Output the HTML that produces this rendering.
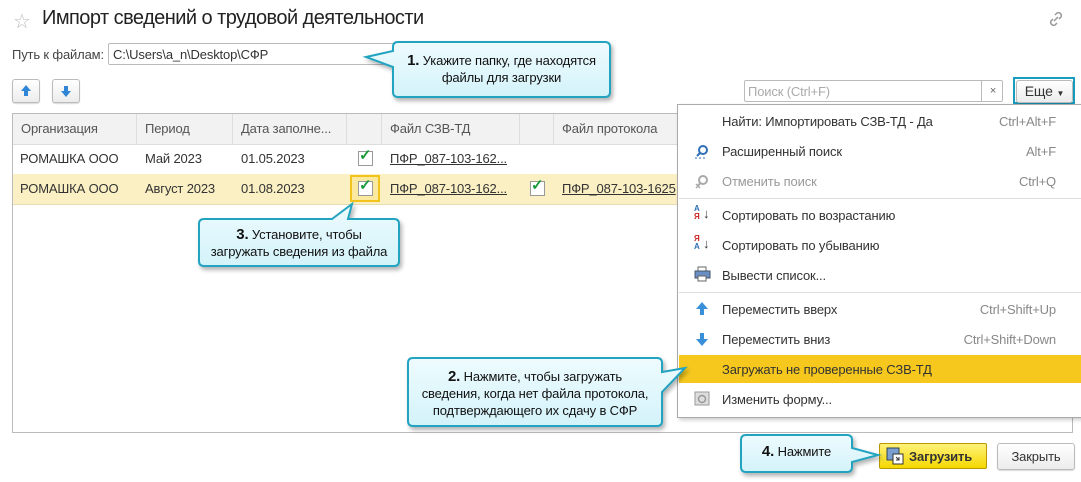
<!DOCTYPE html>
<html><head><meta charset="utf-8"><style>
body{margin:0;width:1081px;height:482px;background:#fff;font-family:"Liberation Sans",sans-serif;font-size:13px;color:#333;position:relative;overflow:hidden;letter-spacing:-0.15px}
.a{position:absolute}
.btn{position:absolute;border:1px solid #bbb;border-radius:3px;background:linear-gradient(#fff,#ececec);box-shadow:0 1px 1px rgba(0,0,0,.15)}
.th{position:absolute;top:114px;height:30px;line-height:30px;color:#555;border-right:1px solid #ddd;box-sizing:border-box;padding-left:8px}
.td{position:absolute;height:30px;line-height:30px;padding-left:8px;box-sizing:border-box}
.u{text-decoration:underline;color:#333}
.cb{position:absolute;width:13px;height:13px;border:1px solid #999;background:#fff}
.mi{position:absolute;left:722px;font-size:13px;color:#333}
.sc{position:absolute;right:25px;color:#888;font-size:13px}
.ct{position:absolute;text-align:center;font-size:13px;color:#111;line-height:17px}
</style></head><body>
<div class="a" style="left:13px;top:9px;font-size:20px;color:#bbb">☆</div>
<div class="a" style="left:42px;top:7px;font-size:20px;color:#222;letter-spacing:-0.55px">Импорт сведений о трудовой деятельности</div>
<svg class="a" style="left:1047px;top:10px" width="18" height="18" viewBox="0 0 18 18"><g fill="none" stroke="#999" stroke-width="1.5"><path d="M7 11l4-4"/><path d="M8 5l2-2a3 3 0 0 1 4 4l-2 2"/><path d="M10 13l-2 2a3 3 0 0 1-4-4l2-2"/></g></svg>
<div class="a" style="left:12px;top:47px;color:#444">Путь к файлам:</div>
<div class="a" style="left:108px;top:43px;width:330px;height:22px;border:1px solid #bbb;border-radius:2px;box-sizing:border-box;padding:3px 4px">C:\Users\a_n\Desktop\СФР</div>
<div class="btn" style="left:12px;top:79px;width:26px;height:22px"><svg width="26" height="22"><path d="M13 5l-5 6h3v5h4v-5h3z" fill="#2f86d6"/></svg></div>
<div class="btn" style="left:52px;top:79px;width:26px;height:22px"><svg width="26" height="22"><path d="M13 17l-5-6h3V6h4v5h3z" fill="#2f86d6"/></svg></div>
<div class="a" style="left:744px;top:80px;width:259px;height:22px;border:1px solid #bbb;border-radius:2px;box-sizing:border-box;padding:3px 3px;color:#aaa">Поиск (Ctrl+F)</div>
<div class="a" style="left:981px;top:80px;width:22px;height:22px;border-left:1px solid #bbb;text-align:center;line-height:22px;color:#666;font-size:11px">×</div>
<div class="a" style="left:1013px;top:77px;width:62px;height:27px;border:2px solid #1a9cbd;box-sizing:border-box"></div>
<div class="btn" style="left:1016px;top:80px;width:55px;height:21px;line-height:21px;text-align:center;font-size:14px;color:#333">Еще <span style="font-size:8px">▼</span></div>
<div class="a" style="left:12px;top:113px;width:1061px;height:320px;border:1px solid #bbb;box-sizing:border-box"></div>
<div class="a" style="left:13px;top:114px;width:1059px;height:30px;background:#f2f2f2;border-bottom:1px solid #ddd"></div>
<div class="th" style="left:13px;width:124px">Организация</div>
<div class="th" style="left:137px;width:96px">Период</div>
<div class="th" style="left:233px;width:114px">Дата заполне...</div>
<div class="th" style="left:347px;width:35px"></div>
<div class="th" style="left:382px;width:138px">Файл СЗВ-ТД</div>
<div class="th" style="left:520px;width:34px"></div>
<div class="th" style="left:554px;width:130px">Файл протокола</div>
<div class="a" style="left:13px;top:144px;width:670px;height:30px;border-bottom:1px solid #eee"></div>
<div class="td" style="left:12px;top:144px">РОМАШКА ООО</div>
<div class="td" style="left:137px;top:144px">Май 2023</div>
<div class="td" style="left:233px;top:144px">01.05.2023</div>
<div class="cb" style="left:358px;top:151px"></div><div class="a" style="left:359px;top:146px;color:#1a9a3a;font-size:15px;font-weight:bold">✓</div>
<div class="td u" style="left:382px;top:144px">ПФР_087-103-162...</div>
<div class="a" style="left:13px;top:174px;width:670px;height:30px;background:#fbf0c4;border-bottom:1px solid #e5dcb0"></div>
<div class="td" style="left:12px;top:174px">РОМАШКА ООО</div>
<div class="td" style="left:137px;top:174px">Август 2023</div>
<div class="td" style="left:233px;top:174px">01.08.2023</div>
<div class="a" style="left:350px;top:175px;width:30px;height:27px;border:2px solid #f2c31a;box-sizing:border-box;background:#fbe9a0"></div>
<div class="cb" style="left:358px;top:181px"></div><div class="a" style="left:359px;top:176px;color:#1a9a3a;font-size:15px;font-weight:bold">✓</div>
<div class="td u" style="left:382px;top:174px">ПФР_087-103-162...</div>
<div class="cb" style="left:530px;top:181px"></div><div class="a" style="left:531px;top:176px;color:#1a9a3a;font-size:15px;font-weight:bold">✓</div>
<div class="td u" style="left:554px;top:174px">ПФР_087-103-1625</div>
<div class="a" style="left:677px;top:104px;width:410px;height:312px;background:#fff;border:1px solid #aaa;box-shadow:2px 2px 4px rgba(0,0,0,.2)"></div>
<div class="mi" style="top:114px">Найти: Импортировать СЗВ-ТД - Да</div><div class="sc" style="top:114px">Ctrl+Alt+F</div>
<svg class="a" style="left:694px;top:144px" width="16" height="16"><circle cx="9" cy="6" r="4" fill="none" stroke="#2f6fb5" stroke-width="2"/><path d="M6 9l-3 3" stroke="#2f6fb5" stroke-width="2"/><path d="M1 14h2M5 14h2M9 14h2" stroke="#2f6fb5"/></svg>
<div class="mi" style="top:144px">Расширенный поиск</div><div class="sc" style="top:144px">Alt+F</div>
<svg class="a" style="left:694px;top:174px" width="16" height="16"><circle cx="9" cy="6" r="4" fill="none" stroke="#aaa" stroke-width="2"/><path d="M6 9l-3 3M2 10l4 4M6 10l-4 4" stroke="#aaa" stroke-width="1.5"/></svg>
<div class="mi" style="top:174px;color:#999">Отменить поиск</div><div class="sc" style="top:174px">Ctrl+Q</div>
<div class="a" style="left:679px;top:198px;width:402px;height:1px;background:#ddd"></div>
<div class="a" style="left:694px;top:205px;font-size:8px;line-height:8px;color:#2f6fb5;font-weight:bold">А<br><span style="color:#c22">Я</span></div><div class="a" style="left:703px;top:206px;font-size:13px">↓</div>
<div class="mi" style="top:208px">Сортировать по возрастанию</div>
<div class="a" style="left:694px;top:235px;font-size:8px;line-height:8px;color:#c22;font-weight:bold">Я<br><span style="color:#2f6fb5">А</span></div><div class="a" style="left:703px;top:236px;font-size:13px">↓</div>
<div class="mi" style="top:238px">Сортировать по убыванию</div>
<svg class="a" style="left:694px;top:266px" width="17" height="16"><rect x="4" y="1" width="8" height="4" fill="#fff" stroke="#666"/><rect x="1" y="5" width="15" height="7" fill="#6a8fc5" stroke="#456"/><rect x="4" y="10" width="8" height="5" fill="#fff" stroke="#666"/></svg>
<div class="mi" style="top:268px">Вывести список...</div>
<div class="a" style="left:679px;top:292px;width:402px;height:1px;background:#ddd"></div>
<svg class="a" style="left:694px;top:301px" width="16" height="16"><path d="M8 1l-6 7h4v6h4V8h4z" fill="#3a8fd9"/></svg>
<div class="mi" style="top:302px">Переместить вверх</div><div class="sc" style="top:302px">Ctrl+Shift+Up</div>
<svg class="a" style="left:694px;top:331px" width="16" height="16"><path d="M8 15l-6-7h4V2h4v6h4z" fill="#3a8fd9"/></svg>
<div class="mi" style="top:332px">Переместить вниз</div><div class="sc" style="top:332px">Ctrl+Shift+Down</div>
<div class="a" style="left:679px;top:355px;width:402px;height:28px;background:#f6c81e"></div>
<div class="mi" style="top:362px">Загружать не проверенные СЗВ-ТД</div>
<svg class="a" style="left:694px;top:391px" width="16" height="16"><rect x="1" y="1" width="14" height="13" fill="#ddd" stroke="#999"/><circle cx="8" cy="8" r="3.5" fill="none" stroke="#999" stroke-width="1.5"/></svg>
<div class="mi" style="top:392px">Изменить форму...</div>
<div class="a" style="left:879px;top:443px;width:108px;height:26px;border:1px solid #b89a00;border-radius:2px;background:linear-gradient(#fff27a,#f5d800);box-sizing:border-box"></div>
<svg class="a" style="left:886px;top:447px" width="18" height="18"><rect x="1" y="1" width="12" height="12" fill="#7a9fd0" stroke="#345"/><rect x="7" y="7" width="10" height="10" fill="#fff" stroke="#333"/><path d="M10 10l3 3m0-3v3h-3" stroke="#333" fill="none"/></svg>
<div class="a" style="left:909px;top:449px;font-weight:bold;font-size:13px;color:#333">Загрузить</div>
<div class="btn" style="left:997px;top:443px;width:76px;height:25px;line-height:25px;text-align:center;color:#333">Закрыть</div>
<svg class="a" style="left:0;top:0" width="1081" height="482">
<defs><filter id="s" x="-10%" y="-10%" width="130%" height="140%"><feDropShadow dx="2" dy="3" stdDeviation="2" flood-color="#000" flood-opacity=".3"/></filter>
<linearGradient id="g" x1="0" y1="0" x2="0" y2="1"><stop offset="0" stop-color="#eefbfe"/><stop offset="1" stop-color="#d3f3fa"/></linearGradient></defs>
<g fill="url(#g)" stroke="#23a3bf" stroke-width="2" filter="url(#s)">
<path d="M398 42H605Q610 42 610 47V92Q610 97 605 97H398Q393 97 393 92V67L366 57L393 51V47Q393 42 398 42Z"/>
<path d="M204 219H332L352 204L348 219H394Q399 219 399 224V261Q399 266 394 266H204Q199 266 199 261V224Q199 219 204 219Z"/>
<path d="M413 358H657Q662 358 662 363V372L685 368L662 392V421Q662 426 657 426H413Q408 426 408 421V363Q408 358 413 358Z"/>
<path d="M746 435H847Q852 435 852 440V448L878 455L852 462V467Q852 472 847 472H746Q741 472 741 467V440Q741 435 746 435Z"/>
</g></svg>
<div class="ct" style="left:393px;top:52px;width:217px"><b style="font-size:15px">1.</b> Укажите папку, где находятся<br>файлы для загрузки</div>
<div class="ct" style="left:199px;top:226px;width:200px"><b style="font-size:15px">3.</b> Установите, чтобы<br>загружать сведения из файла</div>
<div class="ct" style="left:408px;top:368px;width:254px"><b style="font-size:15px">2.</b> Нажмите, чтобы загружать<br>сведения, когда нет файла протокола,<br>подтверждающего их сдачу в СФР</div>
<div class="ct" style="left:741px;top:443px;width:111px"><b style="font-size:15px">4.</b> Нажмите</div>
</body></html>
